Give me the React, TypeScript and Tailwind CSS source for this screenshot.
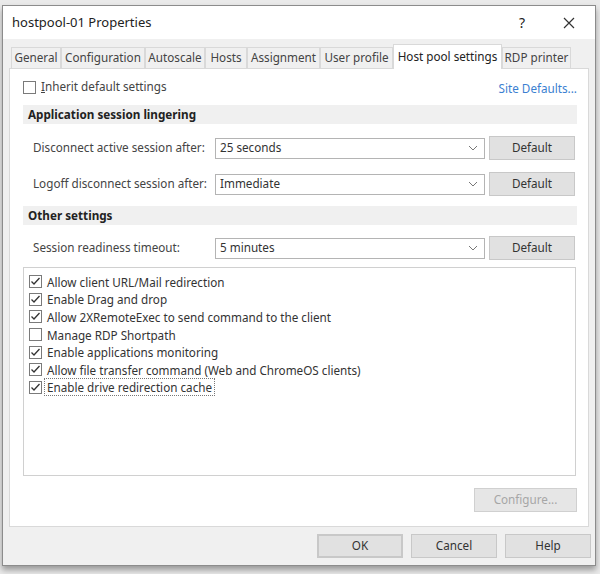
import React from "react";

const font = { fontFamily: '"Noto Sans", "Open Sans", Arial, sans-serif' };

function Check({ checked }: { checked: boolean }) {
  return (
    <div className="w-[13px] h-[13px] border border-[#7a7a7a] bg-white flex items-center justify-center shrink-0">
      {checked && (
        <svg width="11" height="11" viewBox="0 0 11 11">
          <path d="M1.5 5.5 L4 8 L9.5 2" fill="none" stroke="#333" strokeWidth="1.3" />
        </svg>
      )}
    </div>
  );
}

function Select({ value }: { value: string }) {
  return (
    <div className="w-[270px] h-[21px] border border-[#b4b4b4] bg-white flex items-center justify-between pl-[4px] pr-[6px] text-[#333]">
      <span>{value}</span>
      <svg width="10" height="6" viewBox="0 0 10 6">
        <path d="M1 1 L5 5 L9 1" fill="none" stroke="#777" strokeWidth="1" />
      </svg>
    </div>
  );
}

function Btn({ label, className = "" }: { label: string; className?: string }) {
  return (
    <div
      className={
        "w-[86px] h-[24px] border border-[#c8c8c8] bg-[#e1e1e1] flex items-center justify-center text-[#333] " +
        className
      }
    >
      {label}
    </div>
  );
}

function Row({ label, value }: { label: string; value: string }) {
  return (
    <div className="flex items-center h-[24px]">
      <div className="w-[192px] pl-[10px] text-[#444] whitespace-nowrap">{label}</div>
      <Select value={value} />
      <div className="ml-[4px]">
        <Btn label="Default" />
      </div>
    </div>
  );
}

function Section({ title }: { title: string }) {
  return (
    <div className="h-[19px] bg-[#f0f0f0] flex items-center pl-[5px] font-bold text-[#222]">{title}</div>
  );
}

const tabs = [
  ["General", 50],
  ["Configuration", 84],
  ["Autoscale", 60],
  ["Hosts", 42],
  ["Assignment", 73],
  ["User profile", 73],
  ["Host pool settings", 109],
  ["RDP printer", 69],
] as const;

const items: [string, boolean][] = [
  ["Allow client URL/Mail redirection", true],
  ["Enable Drag and drop", true],
  ["Allow 2XRemoteExec to send command to the client", true],
  ["Manage RDP Shortpath", false],
  ["Enable applications monitoring", true],
  ["Allow file transfer command (Web and ChromeOS clients)", true],
  ["Enable drive redirection cache", true],
];

export default function App() {
  return (
    <div className="w-[600px] h-[574px] bg-[#eaeaea] pl-[2px] pt-[5px] text-[11.7px] overflow-hidden" style={font}>
      <div className="w-[594px] h-[561px] border border-[#8c8c8c] bg-[#f0f0f0] flex flex-col shadow-[0_4px_6px_rgba(0,0,0,0.35)]">
        {/* title bar */}
        <div className="h-[33px] bg-white flex items-center pl-[9px] shrink-0">
          <div className="flex-1 text-[13px] text-[#222]">hostpool-01 Properties</div>
          <div className="w-[20px] text-[14px] text-[#222] mr-[31px] text-center">?</div>
          <svg width="12" height="12" viewBox="0 0 12 12" className="mr-[20px]">
            <path d="M1 1 L11 11 M11 1 L1 11" stroke="#333" strokeWidth="1.2" />
          </svg>
        </div>
        {/* tabs */}
        <div className="h-[29px] flex items-end pl-[8px] shrink-0">
          {tabs.map(([t, w]) => {
            const active = t === "Host pool settings";
            return (
              <div
                key={t}
                style={{ width: w }}
                className={
                  active
                    ? "h-[25px] bg-white border border-b-0 border-[#d9d9d9] flex items-center justify-center text-[#222] -mb-[1px] relative z-10"
                    : "h-[21px] bg-[#f0f0f0] border border-b-0 border-[#d9d9d9] flex items-center justify-center text-[#444]"
                }
              >
                {t}
              </div>
            );
          })}
        </div>
        {/* panel */}
        <div className="mx-[6px] h-[459px] bg-white border border-[#d9d9d9] flex flex-col pl-[13px] pr-[11px] pt-[11px] shrink-0">
          <div className="flex items-center h-[14px]">
            <Check checked={false} />
            <span className="ml-[5px] text-[#444] flex-1">
              <u>I</u>nherit default settings
            </span>
            <span className="text-[#3b7fd1] mt-[4px]">Site Defaults...</span>
          </div>
          <div className="mt-[11px]">
            <Section title="Application session lingering" />
          </div>
          <div className="mt-[12px]">
            <Row label="Disconnect active session after:" value="25 seconds" />
          </div>
          <div className="mt-[12px]">
            <Row label="Logoff disconnect session after:" value="Immediate" />
          </div>
          <div className="mt-[10px]">
            <Section title="Other settings" />
          </div>
          <div className="mt-[11px]">
            <Row label="Session readiness timeout:" value="5 minutes" />
          </div>
          <div className="mt-[7px] h-[209px] w-[553px] border border-[#d0d0d0] pt-[5px] pl-[5px] flex flex-col">
            {items.map(([t, c], i) => (
              <div key={t} className="flex items-center h-[17.6px]">
                <Check checked={c} />
                <span
                  className={
                    "ml-[2px] px-[2px] text-[#333] leading-[16px] " +
                    (i === items.length - 1 ? "border border-dotted border-[#777]" : "border border-transparent")
                  }
                >
                  {t}
                </span>
              </div>
            ))}
          </div>
          <div className="mt-[12px] flex justify-end">
            <div className="w-[103px] h-[24px] border border-[#d0d0d0] bg-[#e6e6e6] flex items-center justify-center text-[#a6a6a6]">
              Configure...
            </div>
          </div>
        </div>
        {/* bottom buttons */}
        <div className="flex justify-end gap-[8px] pr-[4px] mt-[7px]">
          <Btn label="OK" className="border-[#3c8fdc] border-2" />
          <Btn label="Cancel" />
          <Btn label="Help" />
        </div>
      </div>
    </div>
  );
}
